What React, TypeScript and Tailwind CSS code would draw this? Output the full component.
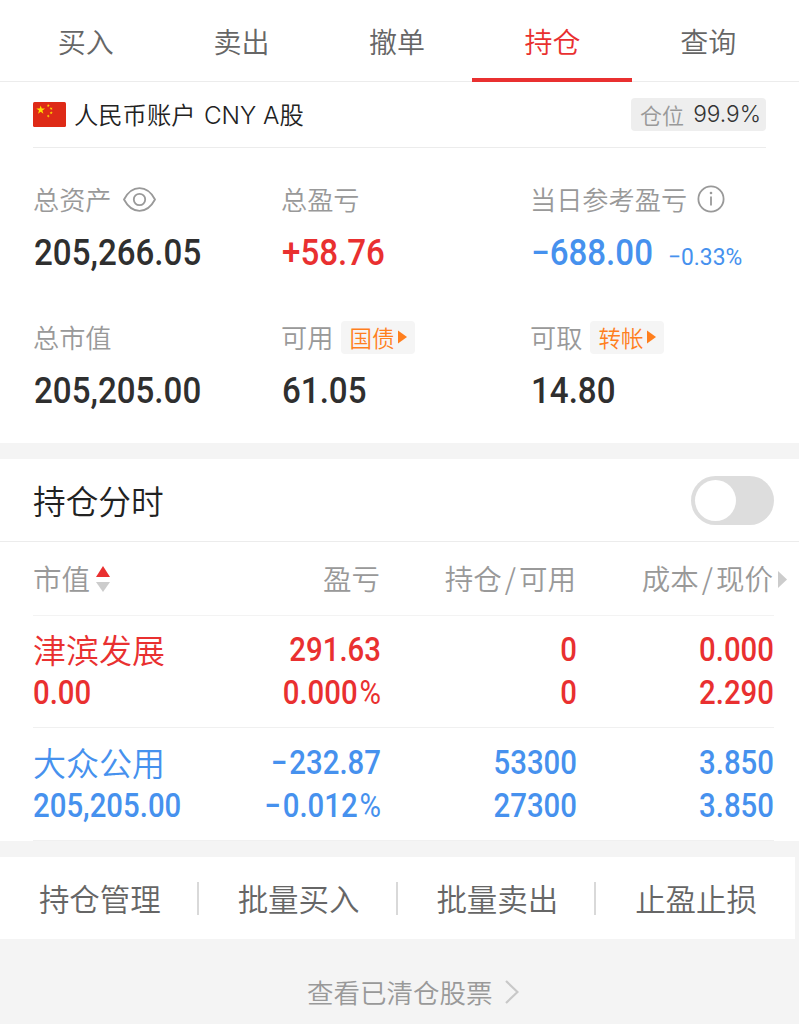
import type { ReactNode } from "react";

const tabs = ["买入", "卖出", "撤单", "持仓", "查询"];

const positions = [
  {
    name: "津滨发展",
    value: "0.00",
    profit: "291.63",
    rate: "0.000%",
    held: "0",
    available: "0",
    cost: "0.000",
    price: "2.290",
    color: "text-[#e93030]",
  },
  {
    name: "大众公用",
    value: "205,205.00",
    profit: "−232.87",
    rate: "−0.012%",
    held: "53300",
    available: "27300",
    cost: "3.850",
    price: "3.850",
    color: "text-[#4691ee]",
  },
];

const actions = ["持仓管理", "批量买入", "批量卖出", "止盈止损"];

function Big({ children, color = "text-[#2f2f2f]" }: { children: ReactNode; color?: string }) {
  return (
    <span
      className={`ml-px block origin-left scale-x-[0.92] font-[Roboto] text-[36px] leading-[44px] font-medium whitespace-nowrap ${color}`}
    >
      {children}
    </span>
  );
}

/* Sets the minus and percent signs a little apart from the digits. */
function Figure({ text }: { text: string }) {
  const negative = text.startsWith("−");
  const percent = text.endsWith("%");
  const digits = text.slice(negative ? 1 : 0, percent ? -1 : undefined);
  return (
    <span>
      {negative && <span className="mr-[2px]">−</span>}
      {digits}
      {percent && <span className="ml-[2px] font-normal">%</span>}
    </span>
  );
}

function Cell({ top, bottom }: { top: string; bottom: string }) {
  return (
    <div className="flex origin-right scale-x-[0.89] flex-col items-end pb-[1px] font-[Roboto] text-[33px] leading-[43px] font-medium whitespace-nowrap">
      <Figure text={top} />
      <Figure text={bottom} />
    </div>
  );
}

function Label({ children }: { children: ReactNode }) {
  return (
    <div className="flex h-[34px] items-center text-[26.200px] leading-[34px] whitespace-nowrap text-[#999]">
      {children}
    </div>
  );
}

function Chip({ children }: { children: ReactNode }) {
  return (
    <span className="ml-[8px] flex h-[33px] w-[74px] items-center rounded-[4px] bg-[#f5f5f5] pl-2 text-[22.500px] text-[#ff7f1e]">
      {children}
      <svg className="ml-[4px]" width="9" height="14" viewBox="0 0 9 14" fill="currentColor">
        <path d="M0 0.5 L9 7 L0 13.5Z" />
      </svg>
    </span>
  );
}

function Flag() {
  const star = "M0-1 L.225-.309 .951-.309 .363.118 .588.809 0 .382-.588.809-.363.118-.951-.309-.225-.309Z";
  return (
    <svg width="33" height="25" viewBox="0 0 33 25">
      <rect width="33" height="25" rx="1.5" fill="#de2a17" />
      <g fill="#ffde00">
        <path d={star} transform="translate(7.7 8) scale(4.6)" />
        <path d={star} transform="translate(15.3 3.7) rotate(20) scale(1.7)" />
        <path d={star} transform="translate(18.2 6.6) rotate(45) scale(1.7)" />
        <path d={star} transform="translate(18.2 10.9) scale(1.7)" />
        <path d={star} transform="translate(15.3 14) rotate(20) scale(1.7)" />
      </g>
    </svg>
  );
}

export default function App() {
  return (
    <div className="h-[1024px] w-full overflow-hidden bg-white font-['Noto_Sans_CJK_SC',sans-serif] font-[350]">
      <div className="flex h-full w-[799px] flex-col">
        <nav className="flex h-[82px] shrink-0 border-b border-[#ececec] pr-[13px] pl-2">
          {tabs.map((tab) => (
            <div
              key={tab}
              className={`relative flex flex-1 items-center justify-center pt-[1px] text-[28px] ${
                tab === "持仓" ? "text-[#e93030]" : "text-[#666]"
              }`}
            >
              {tab}
              {tab === "持仓" && (
                <span className="absolute -right-[2px] -bottom-[1px] -left-[3px] h-1 bg-[#e93030]" />
              )}
            </div>
          ))}
        </nav>

        <section className="flex h-[361px] shrink-0 flex-col pr-[33px] pl-[33px]">
          <div className="flex h-[66px] shrink-0 items-center border-b border-[#ececec]">
            <Flag />
            <span className="ml-2 pt-px text-[24.300px] whitespace-nowrap text-[#222]">
              人民币账户 <span className="ml-[3px] font-[Inter]">CNY A</span>股
            </span>
            <span className="ml-auto flex h-[33px] w-[135px] items-center justify-between rounded-[4px] bg-[#eee] pr-[5px] pl-[9px] text-[22px] whitespace-nowrap text-[#999]">
              仓位 <span className="font-[Inter] text-[22.700px] text-[#333]">99.9%</span>
            </span>
          </div>
          <div className="grid grid-cols-[248px_249px_236px] gap-y-[45px] pt-[34px]">
            <div>
              <Label>
                总资产
                <svg className="ml-[11px]" width="33" height="25" viewBox="0 0 33 25" fill="none" stroke="#999" strokeWidth="1.8">
                  <path d="M1 12.5 C5 5 10.500 1.200 16.500 1.200 S28 5 32 12.500 C28 20 22.500 23.800 16.500 23.800 S5 20 1 12.500Z" />
                  <circle cx="16.500" cy="12.500" r="5.700" />
                </svg>
              </Label>
              <div className="mt-[15px]">
                <Big>205,266.05</Big>
              </div>
            </div>
            <div>
              <Label>总盈亏</Label>
              <div className="mt-[15px]">
                <Big color="text-[#e93030]">+58.76</Big>
              </div>
            </div>
            <div>
              <Label>
                当日参考盈亏
                <svg className="ml-[10px]" width="28" height="28" viewBox="0 0 28 28" fill="none" stroke="#999">
                  <circle cx="14" cy="14" r="12.600" strokeWidth="1.800" />
                  <path d="M14 11.500 V20.500" strokeWidth="1.800" />
                  <circle cx="14" cy="8" r="1.300" fill="#999" stroke="none" />
                </svg>
              </Label>
              <div className="mt-[15px] flex h-[44px]">
                <div className="w-[138px]">
                  <Big color="text-[#4691ee]">−688.00</Big>
                </div>
                <span className="block origin-left scale-x-[0.95] pt-1 font-[Roboto] text-[24px] leading-[44px] font-normal whitespace-nowrap text-[#4691ee]">
                  −0.33%
                </span>
              </div>
            </div>
            <div>
              <Label>总市值</Label>
              <div className="mt-[15px]">
                <Big>205,205.00</Big>
              </div>
            </div>
            <div>
              <Label>
                可用<Chip>国债</Chip>
              </Label>
              <div className="mt-[15px]">
                <Big>61.05</Big>
              </div>
            </div>
            <div>
              <Label>
                可取<Chip>转帐</Chip>
              </Label>
              <div className="mt-[15px]">
                <Big>14.80</Big>
              </div>
            </div>
          </div>
        </section>

        <div className="h-4 shrink-0 bg-[#f4f4f4]" />

        <section className="flex h-[83px] shrink-0 items-center justify-between border-b border-[#ececec] pr-[25px] pl-[33px]">
          <h2 className="text-[32.700px] text-[#222]">持仓分时</h2>
          <button className="flex h-[49px] w-[83px] items-center rounded-full bg-[#ddd] pl-1" aria-label="持仓分时">
            <span className="size-[41px] rounded-full bg-white" />
          </button>
        </section>

        <section className="h-[299px] shrink-0 pl-[33px]">
          <div className="flex">
            <div className="w-[741px]">
              <div className="grid h-[74px] grid-cols-[148px_199px_196px_198px] items-center border-b border-[#f3f3f3] text-[28.500px] text-[#999]">
                <div className="flex items-center">
                  市值
                  <svg className="ml-[6px]" width="14" height="26" viewBox="0 0 14 26">
                    <path d="M7 0 L14 11 H0Z" fill="#e93030" />
                    <path d="M0 16 H14 L7 26Z" fill="#ccc" />
                  </svg>
                </div>
                <span className="text-right">盈亏</span>
                <span className="text-right">
                  持仓<span className="mx-[3px]">/</span>可用
                </span>
                <span className="pr-px text-right">
                  成本<span className="mx-[3px]">/</span>现价
                </span>
              </div>
              {positions.map((p) => (
                <div
                  key={p.name}
                  className={`grid h-[112px] grid-cols-[148px_200px_196px_197px] items-center border-b border-[#f0f0f0] last:h-[113px] ${p.color}`}
                >
                  <div className="pb-[1px] whitespace-nowrap">
                    <div className="text-[33px] leading-[43px]">{p.name}</div>
                    <div className="origin-left scale-x-[0.89] font-[Roboto] text-[33px] leading-[43px] font-medium">
                      {p.value}
                    </div>
                  </div>
                  <Cell top={p.profit} bottom={p.rate} />
                  <Cell top={p.held} bottom={p.available} />
                  <Cell top={p.cost} bottom={p.price} />
                </div>
              ))}
            </div>
            <svg className="mt-[29px] ml-1" width="9" height="17" viewBox="0 0 9 17">
              <path d="M0 0 L9 8.500 L0 17Z" fill="#ccc" />
            </svg>
          </div>
        </section>

        <footer className="flex-1 bg-[#f4f4f4] pt-4">
          <div className="grid h-[82px] w-[795px] grid-cols-4 items-center bg-white">
            {actions.map((action) => (
              <div
                key={action}
                className="flex h-[33px] items-center justify-center border-r-2 border-[#d9d9d9] pt-[2px] pl-[3px] text-[30.500px] text-[#666] last:border-transparent"
              >
                {action}
              </div>
            ))}
          </div>
          <div className="flex h-[106px] items-center pl-[307px] text-[26.500px] text-[#999]">
            查看已清仓股票
            <svg className="ml-3" width="14" height="24" viewBox="0 0 14 24" fill="none" stroke="#c8c8c8" strokeWidth="2.200">
              <path d="M1 1 L12.500 12 L1 23" />
            </svg>
          </div>
        </footer>
      </div>
    </div>
  );
}
